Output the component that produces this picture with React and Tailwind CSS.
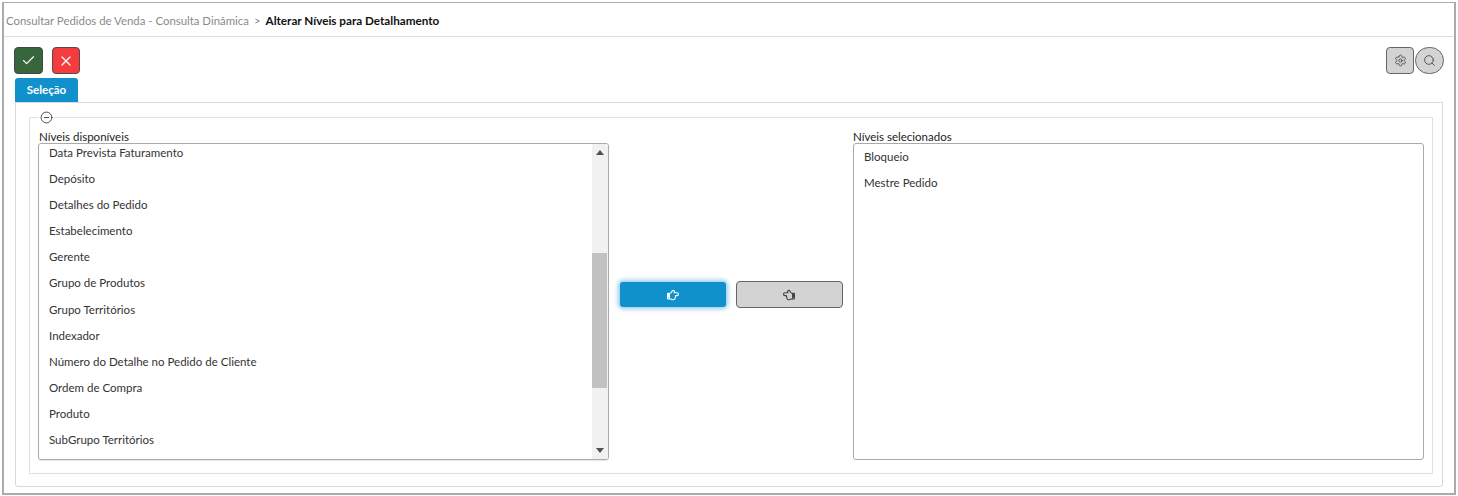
import React from "react";
import { FaRegHandPointRight, FaRegHandPointLeft } from "react-icons/fa";
import { Check, X, Settings, Search, MinusCircle } from "lucide-react";

const left = ["Data Prevista Faturamento","Depósito","Detalhes do Pedido","Estabelecimento","Gerente","Grupo de Produtos","Grupo Territórios","Indexador","Número do Detalhe no Pedido de Cliente","Ordem de Compra","Produto","SubGrupo Territórios"];
const right = ["Bloqueio","Mestre Pedido"];

function Item({ children }) {
  return <li className="h-[26.1px] leading-[26.1px] pl-[10px] whitespace-nowrap">{children}</li>;
}

export default function App() {
  return (
    <div className="w-[1458px] h-[496px] bg-white pt-[2px] pl-[2px] pr-[2px] pb-[1px] font-['Lato','Carlito',sans-serif] text-[11.5px] text-[#333]">
      <div className="h-full w-[1454px] border-2 border-[#ababab] border-t-[1.5px] flex flex-col">
        <div className="h-[33px] border-b border-[#ddd] flex items-center pl-[2px] pt-[2px] text-[11.5px] shrink-0 mt-[1px]">
          <span className="text-[#8a8a8a] text-[11.4px]">Consultar Pedidos de Venda - Consulta Dinâmica</span>
          <span className="text-[#8a8a8a] mx-[5px]">&gt;</span>
          <span className="font-bold text-[#111] text-[11.7px]">Alterar Níveis para Detalhamento</span>
        </div>
        <div className="flex items-start justify-between pl-[10px] pr-[10px] pt-[10px] h-[41px] shrink-0">
          <div className="flex gap-[9px]">
            <button className="w-[29px] h-[27px] rounded-[4px] bg-[#38663c] border border-[#444] flex items-center justify-center">
              <Check size={15} color="#fff" strokeWidth={1.8} />
            </button>
            <button className="w-[28px] h-[27px] rounded-[4px] bg-[#f43c3f] border border-[#5a4a4a] flex items-center justify-center">
              <X size={16} color="#fff" strokeWidth={1.8} />
            </button>
          </div>
          <div className="flex gap-[1px]">
            <button className="w-[28px] h-[27px] rounded-[4px] bg-[#d3d3d3] border-[1.5px] border-[#666] flex items-center justify-center">
              <Settings size={13} color="#444" strokeWidth={1.6} />
            </button>
            <button className="w-[29px] h-[27px] rounded-full bg-[#d3d3d3] border border-[#666] flex items-center justify-center">
              <Search size={13} color="#444" strokeWidth={1.6} />
            </button>
          </div>
        </div>
        <div className="pl-[11px] shrink-0">
          <div className="w-[63px] h-[24px] rounded-t-[3px] bg-[#1091cc] text-white font-bold text-[11.5px] flex items-center justify-center">Seleção</div>
        </div>
        <div className="ml-[11px] mr-[11px] mb-[6px] flex-1 min-h-0 border border-[#d8d8d8] rounded-b-[3px] pt-[14px] pl-[13px] pr-[9px] pb-[12px]">
          <div className="relative h-full border border-[#e0e0e0] pt-[12px] pl-[8px] pr-[8px] pb-[13px] flex flex-col">
            <MinusCircle size={13} color="#333" strokeWidth={1.6} className="absolute left-[9px] top-[-7px] bg-white box-content px-[1px]" />
            <div className="flex flex-1 min-h-0">
              <div className="w-[571px] flex flex-col">
                <label className="h-[13px] leading-[13px] pl-[1px] text-[#222] text-[11.5px]">Níveis disponíveis</label>
                <div className="flex-1 min-h-0 border border-[#aaa] rounded-[3px] flex overflow-hidden shadow-[0_1px_1px_rgba(0,0,0,0.1)]">
                  <div className="flex-1 overflow-hidden">
                    <ul className="-mt-[4px]">
                      {left.map((t) => <Item key={t}>{t}</Item>)}
                    </ul>
                  </div>
                  <div className="w-[16px] bg-[#f1f1f1] flex flex-col items-center">
                    <div className="h-[17px] flex items-center justify-center shrink-0">
                      <div className="w-0 h-0 border-x-[4px] border-x-transparent border-b-[5px] border-b-[#505050]" />
                    </div>
                    <div className="flex-1 w-full pt-[92px]">
                      <div className="h-[135px] w-[15px] bg-[#c1c1c1]" />
                    </div>
                    <div className="h-[17px] flex items-center justify-center shrink-0">
                      <div className="w-0 h-0 border-x-[4px] border-x-transparent border-t-[5px] border-t-[#505050]" />
                    </div>
                  </div>
                </div>
              </div>
              <div className="flex-1 flex items-center justify-center gap-[10px] pb-[1px]">
                <button className="w-[106px] h-[25px] rounded-[3px] bg-[#1091cc] shadow-[0_0_4px_2px_rgba(16,145,204,0.45)] flex items-center justify-center">
                  <FaRegHandPointRight size={12} color="#fff" />
                </button>
                <button className="w-[107px] h-[27px] rounded-[4px] bg-[#d3d3d3] border border-[#666] flex items-center justify-center">
                  <FaRegHandPointLeft size={12} color="#444" />
                </button>
              </div>
              <div className="w-[571px] flex flex-col">
                <label className="h-[13px] leading-[13px] text-[#222] text-[11.5px]">Níveis selecionados</label>
                <div className="flex-1 min-h-0 border border-[#aaa] rounded-[3px] overflow-hidden">
                  <ul>
                    {right.map((t) => <Item key={t}>{t}</Item>)}
                  </ul>
                </div>
              </div>
            </div>
          </div>
        </div>
      </div>
    </div>
  );
}
